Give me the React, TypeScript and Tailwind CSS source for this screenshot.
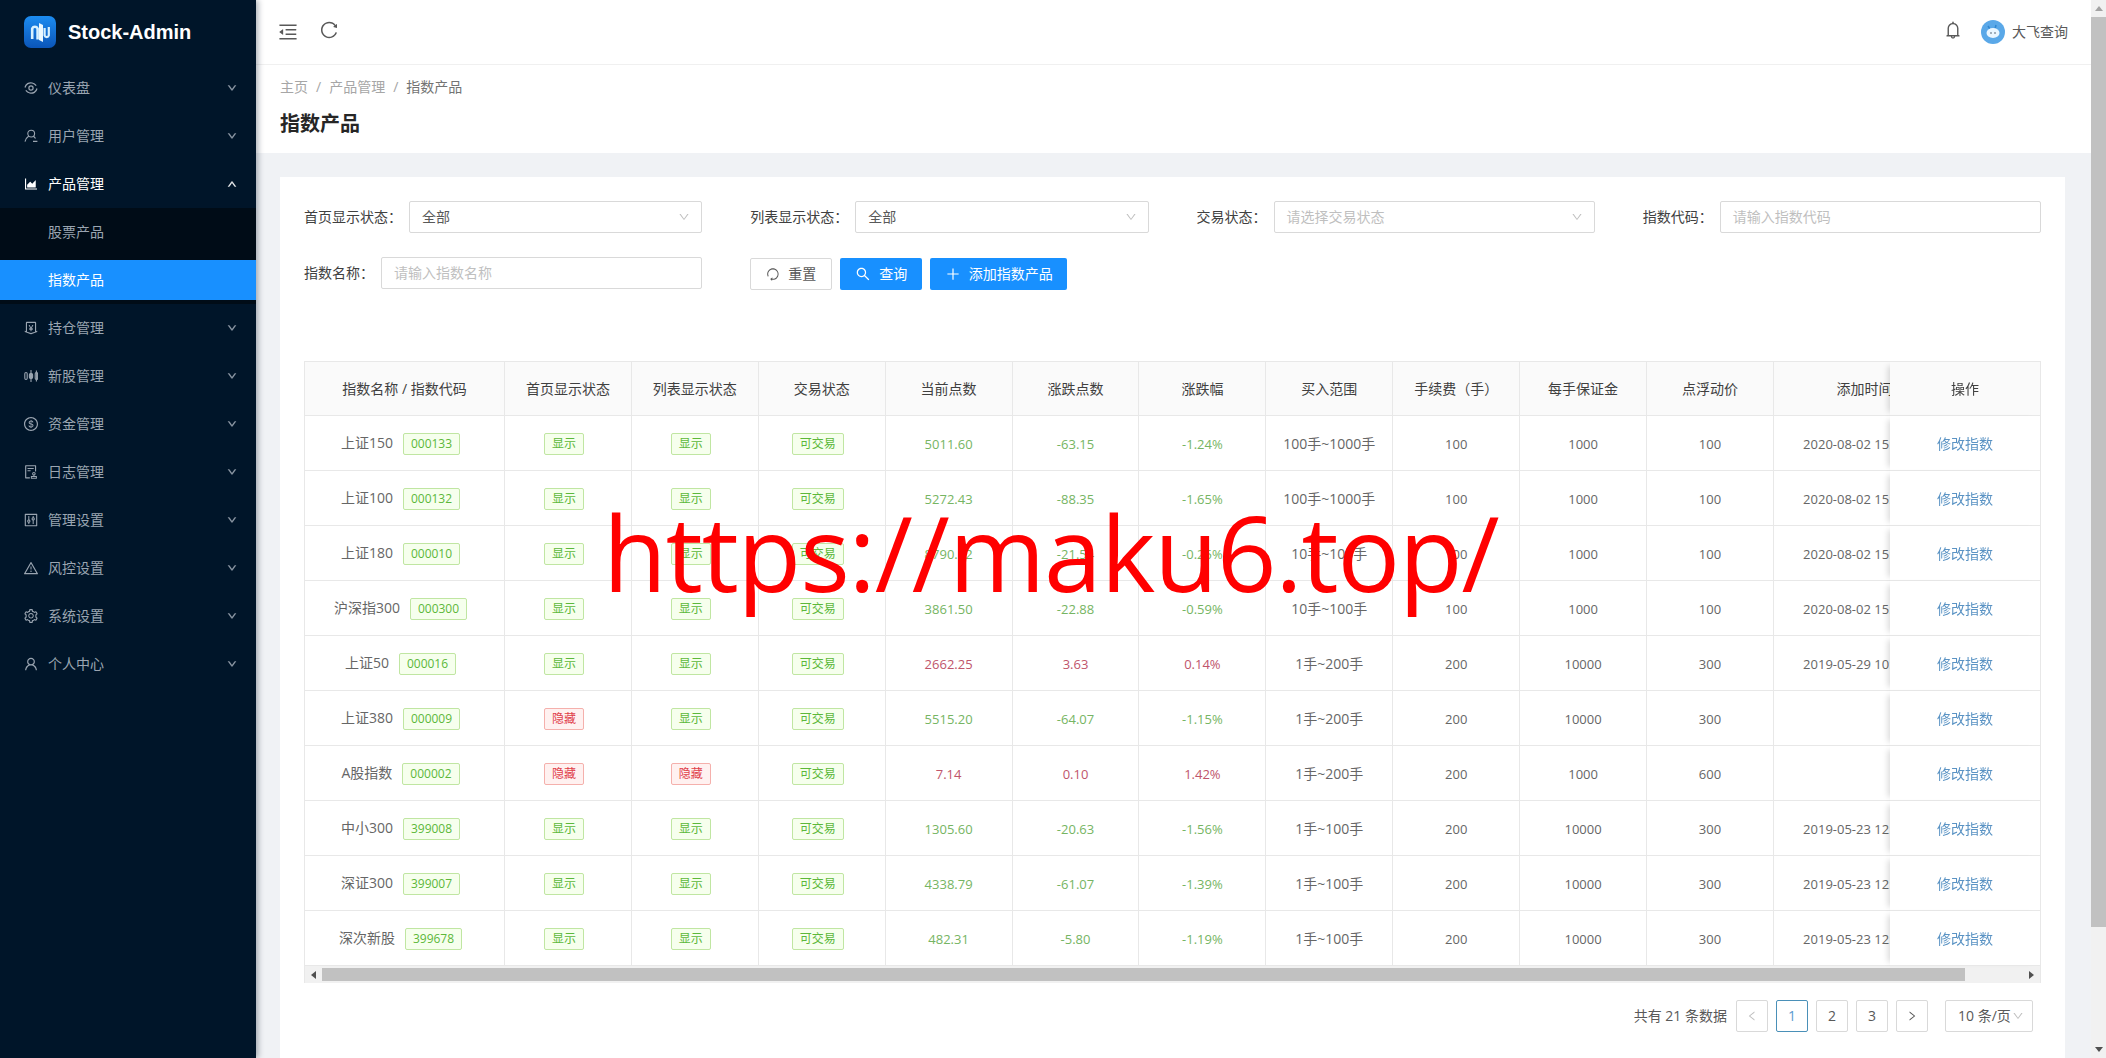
import React from 'react';
import {
  AiOutlineAreaChart,
  AiOutlineAudit,
  AiOutlineBell,
  AiOutlineControl,
  AiOutlineDollar,
  AiOutlineDown,
  AiOutlineLeft,
  AiOutlineMenuFold,
  AiOutlineMoneyCollect,
  AiOutlinePlus,
  AiOutlineReload,
  AiOutlineRight,
  AiOutlineSearch,
  AiOutlineSetting,
  AiOutlineUp,
  AiOutlineUser,
  AiOutlineWarning,
} from 'react-icons/ai';

const GREEN = 'text-[#76b563]';
const RED = 'text-[#c0556b]';

type Row = {
  name: string;
  code: string;
  home: boolean;
  list: boolean;
  price: string;
  diff: string;
  pct: string;
  range: string;
  fee: string;
  margin: string;
  point: string;
  time: string;
};

const rows: Row[] = [
  { name: '上证150', code: '000133', home: true, list: true, price: '5011.60', diff: '-63.15', pct: '-1.24%', range: '100手~1000手', fee: '100', margin: '1000', point: '100', time: '2020-08-02 15:10:41' },
  { name: '上证100', code: '000132', home: true, list: true, price: '5272.43', diff: '-88.35', pct: '-1.65%', range: '100手~1000手', fee: '100', margin: '1000', point: '100', time: '2020-08-02 15:10:22' },
  { name: '上证180', code: '000010', home: true, list: true, price: '8790.22', diff: '-21.54', pct: '-0.25%', range: '10手~100手', fee: '100', margin: '1000', point: '100', time: '2020-08-02 15:09:58' },
  { name: '沪深指300', code: '000300', home: true, list: true, price: '3861.50', diff: '-22.88', pct: '-0.59%', range: '10手~100手', fee: '100', margin: '1000', point: '100', time: '2020-08-02 15:09:31' },
  { name: '上证50', code: '000016', home: true, list: true, price: '2662.25', diff: '3.63', pct: '0.14%', range: '1手~200手', fee: '200', margin: '10000', point: '300', time: '2019-05-29 10:21:05' },
  { name: '上证380', code: '000009', home: false, list: true, price: '5515.20', diff: '-64.07', pct: '-1.15%', range: '1手~200手', fee: '200', margin: '10000', point: '300', time: '' },
  { name: 'A股指数', code: '000002', home: false, list: false, price: '7.14', diff: '0.10', pct: '1.42%', range: '1手~200手', fee: '200', margin: '1000', point: '600', time: '' },
  { name: '中小300', code: '399008', home: true, list: true, price: '1305.60', diff: '-20.63', pct: '-1.56%', range: '1手~100手', fee: '200', margin: '10000', point: '300', time: '2019-05-23 12:40:16' },
  { name: '深证300', code: '399007', home: true, list: true, price: '4338.79', diff: '-61.07', pct: '-1.39%', range: '1手~100手', fee: '200', margin: '10000', point: '300', time: '2019-05-23 12:38:47' },
  { name: '深次新股', code: '399678', home: true, list: true, price: '482.31', diff: '-5.80', pct: '-1.19%', range: '1手~100手', fee: '200', margin: '10000', point: '300', time: '2019-05-23 12:36:02' },
];

const headers = ['指数名称 / 指数代码', '首页显示状态', '列表显示状态', '交易状态', '当前点数', '涨跌点数', '涨跌幅', '买入范围', '手续费（手）', '每手保证金', '点浮动价', '添加时间'];

const DashIcon = () => (
  <svg viewBox="0 0 14 14" className="w-[14px] h-[14px]" fill="none" stroke="currentColor" strokeWidth="1.2">
    <circle cx="7" cy="7" r="2.1" />
    <path d="M1 6.5C1.8 3 5 1.2 8.2 2c1.6.4 3 1.3 4 2.6M13 7.5c-.8 3.5-4 5.3-7.2 4.5-1.6-.4-3-1.3-4-2.6" />
  </svg>
);

const UserLineIcon = () => (
  <svg viewBox="0 0 14 14" className="w-[14px] h-[14px]" fill="none" stroke="currentColor" strokeWidth="1.1">
    <circle cx="7.2" cy="4.6" r="3.4" />
    <path d="M4.8 7C3 8.2 1.6 10 1 12.6M9.4 7.2c.9.6 1.6 1.4 2.1 2.3M9 12.4h4.4" />
  </svg>
);

const CandleIcon = () => (
  <svg viewBox="0 0 14 14" className="w-[14px] h-[14px]" fill="none" stroke="currentColor" strokeWidth="1.1">
    <rect x="0.8" y="3.5" width="2.4" height="7" rx="1.2" />
    <path d="M7 1v12M12.4 1.5v11" />
    <rect x="5.4" y="4.5" width="3.2" height="5" rx="1.2" fill="currentColor" />
    <rect x="11.2" y="3.5" width="2.4" height="7" rx="1.2" />
  </svg>
);

const LogoIcon = () => (
  <svg viewBox="0 0 32 32" className="w-8 h-8 shrink-0">
    <defs>
      <linearGradient id="logoBg" x1="0" y1="0" x2="0" y2="1">
        <stop offset="0" stopColor="#1c8cf0" />
        <stop offset="1" stopColor="#0b55b8" />
      </linearGradient>
    </defs>
    <rect width="32" height="32" rx="7" fill="url(#logoBg)" />
    <path d="M8.2 23V12.5a3 3 0 0 1 5.4 0V23.5" fill="none" stroke="#d8f1ff" strokeWidth="2.6" />
    <path d="M15 7l4 2v17l-4-2z" fill="#eaf8ff" />
    <path d="M20.6 12v7.5a2.2 2.2 0 0 0 4.2 0V11" fill="none" stroke="#d8f1ff" strokeWidth="2.2" />
  </svg>
);

const menus: { label: string; icon: React.ReactNode; open?: boolean }[] = [
  { label: '仪表盘', icon: <DashIcon /> },
  { label: '用户管理', icon: <UserLineIcon /> },
  { label: '产品管理', icon: <AiOutlineAreaChart size={16} className="-ml-px" />, open: true },
  { label: '持仓管理', icon: <AiOutlineMoneyCollect size={16} className="-ml-px" /> },
  { label: '新股管理', icon: <CandleIcon /> },
  { label: '资金管理', icon: <AiOutlineDollar size={16} className="-ml-px" /> },
  { label: '日志管理', icon: <AiOutlineAudit size={16} className="-ml-px" /> },
  { label: '管理设置', icon: <AiOutlineControl size={16} className="-ml-px" /> },
  { label: '风控设置', icon: <AiOutlineWarning size={16} className="-ml-px" /> },
  { label: '系统设置', icon: <AiOutlineSetting size={16} className="-ml-px" /> },
  { label: '个人中心', icon: <AiOutlineUser size={16} className="-ml-px" /> },
];

const Sidebar = () => (
  <aside className="w-64 shrink-0 h-full bg-[#001529] text-[#9aa5b1] text-sm shadow-[2px_0_6px_rgba(0,21,41,0.35)] z-10">
    <div className="h-16 flex items-center pl-6 gap-3">
      <LogoIcon />
      <span className="text-white text-xl font-bold font-['Liberation_Sans',sans-serif]">Stock-Admin</span>
    </div>
    {menus.map((m) => (
      <div key={m.label}>
        <div className={`h-12 flex items-center pl-6 pr-[19px] ${m.open ? 'text-white' : ''}`}>
          <span className="w-6 shrink-0 flex items-center">{m.icon}</span>
          <span className="flex-1">{m.label}</span>
          {m.open ? <AiOutlineUp size={10} className="stroke-[60]" /> : <AiOutlineDown size={10} className="stroke-[60]" />}
        </div>
        {m.open && (
          <div className="bg-[#000c17] pt-1 h-24">
            <div className="h-10 flex items-center pl-12">股票产品</div>
            <div className="h-10 mt-2 flex items-center pl-12 bg-[#1890ff] text-white">指数产品</div>
          </div>
        )}
      </div>
    ))}
  </aside>
);

const Tag = ({ ok, children }: { ok: boolean; children: React.ReactNode }) => (
  <span
    className={`inline-block h-[22px] leading-[20px] px-[7px] mr-2 text-xs rounded-[2px] border ${
      ok ? 'bg-[#f6ffed] border-[#c0e6a2] text-[#5cb83a]' : 'bg-[#fff1f0] border-[#f5b0ac] text-[#e0404a]'
    }`}
  >
    {children}
  </span>
);

const Label = ({ children }: { children: React.ReactNode }) => (
  <span className="shrink-0 text-[#404040] mr-[7px]">{children}：</span>
);

const SelectBox = ({ text, placeholder }: { text: string; placeholder?: boolean }) => (
  <div className="flex-1 h-8 border border-[#d9d9d9] rounded-[2px] flex items-center justify-between pl-3 pr-[11px] bg-white">
    <span className={placeholder ? 'text-[#bfbfbf]' : 'text-[#595959]'}>{text}</span>
    <AiOutlineDown size={12} className="text-[#bfbfbf]" />
  </div>
);

const InputBox = ({ placeholder }: { placeholder: string }) => (
  <div className="flex-1 h-8 border border-[#d9d9d9] rounded-[2px] flex items-center pl-3 text-[#bfbfbf] bg-white">{placeholder}</div>
);

const Filters = () => (
  <div className="grid grid-cols-4 gap-x-12 gap-y-6">
    <div className="flex items-center">
      <Label>首页显示状态</Label>
      <SelectBox text="全部" />
    </div>
    <div className="flex items-center">
      <Label>列表显示状态</Label>
      <SelectBox text="全部" />
    </div>
    <div className="flex items-center">
      <Label>交易状态</Label>
      <SelectBox text="请选择交易状态" placeholder />
    </div>
    <div className="flex items-center">
      <Label>指数代码</Label>
      <InputBox placeholder="请输入指数代码" />
    </div>
    <div className="flex items-center">
      <Label>指数名称</Label>
      <InputBox placeholder="请输入指数名称" />
    </div>
    <div className="flex items-center gap-2 col-span-3 translate-y-px">
      <button className="h-8 w-[82px] border border-[#d9d9d9] rounded-[2px] text-[#595959] flex items-center justify-center gap-2 bg-white">
        <AiOutlineReload size={14} className="rotate-[135deg]" />
        重置
      </button>
      <button className="h-8 w-[82px] rounded-[2px] bg-[#1890ff] text-white flex items-center justify-center gap-2">
        <AiOutlineSearch size={16} />
        查询
      </button>
      <button className="h-8 w-[137px] rounded-[2px] bg-[#1890ff] text-white flex items-center justify-center gap-2">
        <AiOutlinePlus size={16} />
        添加指数产品
      </button>
    </div>
  </div>
);

const cell = 'border-b border-r border-[#e8e8e8] text-center';

const IndexTable = () => (
  <div className="mt-[72px] border-t border-l border-r border-[#e8e8e8] overflow-hidden">
    <table className="table-fixed border-separate border-spacing-0 w-[1801px] text-[#666666]">
      <colgroup>
        <col className="w-[200px]" />
        {[0, 1, 2, 3, 4, 5, 6, 7, 8, 9].map((i) => (
          <col key={i} className="w-[126.9px]" />
        ))}
        <col className="w-[182px]" />
        <col className="w-[150px]" />
      </colgroup>
      <thead>
        <tr className="h-[54px]">
          {headers.map((h) => (
            <th key={h} className={`${cell} bg-[#fafafa] font-normal text-[#404040]`}>
              {h}
            </th>
          ))}
          <th className="border-b border-[#e8e8e8] text-center bg-[#fafafa] font-normal text-[#404040] sticky right-0 shadow-[-6px_0_6px_-4px_rgba(0,0,0,0.15)]">操作</th>
        </tr>
      </thead>
      <tbody>
        {rows.map((r) => {
          const up = !r.diff.startsWith('-');
          const color = up ? RED : GREEN;
          return (
            <tr key={r.code} className="h-[55px] [&>td]:pt-0.5">
              <td className={cell}>
                {r.name}
                <span className="inline-block w-[10px]" />
                <Tag ok>{r.code}</Tag>
              </td>
              <td className={cell}>
                <Tag ok={r.home}>{r.home ? '显示' : '隐藏'}</Tag>
              </td>
              <td className={cell}>
                <Tag ok={r.list}>{r.list ? '显示' : '隐藏'}</Tag>
              </td>
              <td className={cell}>
                <Tag ok>可交易</Tag>
              </td>
              <td className={`${cell} ${color} text-[13px]`}>{r.price}</td>
              <td className={`${cell} ${color} text-[13px]`}>{r.diff}</td>
              <td className={`${cell} ${color} text-[13px]`}>{r.pct}</td>
              <td className={cell}>{r.range}</td>
              <td className={`${cell} text-[13px]`}>{r.fee}</td>
              <td className={`${cell} text-[13px]`}>{r.margin}</td>
              <td className={`${cell} text-[13px]`}>{r.point}</td>
              <td className={`${cell} text-[13px] whitespace-nowrap`}>{r.time}</td>
              <td className="border-b border-[#e8e8e8] text-center bg-white text-[#5a93c4] sticky right-0 shadow-[-6px_0_6px_-4px_rgba(0,0,0,0.15)]">修改指数</td>
            </tr>
          );
        })}
      </tbody>
    </table>
    <div className="h-[17px] bg-[#f1f1f1] flex items-center">
      <span className="w-[17px] flex justify-center">
        <span className="border-y-[4px] border-y-transparent border-r-[5px] border-r-[#505050]" />
      </span>
      <div className="w-[1643px] h-[13px] bg-[#c1c1c1]" />
      <span className="flex-1 flex justify-end pr-[6px]">
        <span className="border-y-[4px] border-y-transparent border-l-[5px] border-l-[#505050]" />
      </span>
    </div>
  </div>
);

const PageBtn = ({ children, active }: { children: React.ReactNode; active?: boolean }) => (
  <div className={`w-8 h-8 rounded-[2px] border flex items-center justify-center ${active ? 'border-[#4a90b8] text-[#5a9bd0]' : 'border-[#d9d9d9] text-[#595959]'}`}>
    {children}
  </div>
);

const Pagination = () => (
  <div className="mt-[17px] flex items-center justify-end gap-2 pr-2 text-[#595959]">
    <span className="mr-[1px]">共有 21 条数据</span>
    <PageBtn>
      <AiOutlineLeft size={12} className="text-[#bfbfbf]" />
    </PageBtn>
    <PageBtn active>1</PageBtn>
    <PageBtn>2</PageBtn>
    <PageBtn>3</PageBtn>
    <PageBtn>
      <AiOutlineRight size={12} />
    </PageBtn>
    <div className="ml-[9px] w-[88px] h-8 rounded-[2px] border border-[#d9d9d9] flex items-center pl-3 pr-2 justify-between">
      <span className="whitespace-nowrap">10 条/页</span>
      <AiOutlineDown size={12} className="text-[#bfbfbf] shrink-0" />
    </div>
  </div>
);

const Avatar = () => (
  <svg viewBox="0 0 24 24" className="w-6 h-6">
    <circle cx="12" cy="12" r="12" fill="#5aa8e8" />
    <path d="M7 6l2 3M15 5l-1 4" stroke="#2f86d0" strokeWidth="1.5" />
    <ellipse cx="12" cy="13" rx="6.5" ry="5" fill="#eaf6ff" />
    <circle cx="10" cy="13" r=".8" fill="#456" />
    <circle cx="14" cy="13" r=".8" fill="#456" />
  </svg>
);

const Topbar = () => (
  <header className="h-[65px] shrink-0 bg-white border-b border-[#f0f0f0] flex items-center pl-[21px] pr-[23px] text-[#595959]">
    <AiOutlineMenuFold size={22} />
    <AiOutlineReload size={20} className="ml-5 -mt-1" />
    <AiOutlineBell size={20} className="ml-auto -mt-1" />
    <span className="ml-[18px] mr-[7px]">
      <Avatar />
    </span>
    <span>大飞查询</span>
  </header>
);

export default function App() {
  return (
    <div className="h-[1058px] w-[2106px] overflow-hidden flex text-sm font-['Open_Sans','Noto_Sans_CJK_SC',sans-serif] relative">
      <Sidebar />
      <main className="flex-1 min-w-0 flex flex-col bg-[#f0f2f5]">
        <Topbar />
        <div className="h-[88px] shrink-0 bg-white px-6 pt-3">
          <div className="text-[#a6a6a6] h-5 flex items-center">
            主页<span className="mx-2">/</span>产品管理<span className="mx-2">/</span>
            <span className="text-[#737373]">指数产品</span>
          </div>
          <h1 className="mt-[13px] text-xl font-semibold text-[#262626] leading-7">指数产品</h1>
        </div>
        <div className="flex-1 pt-6 pl-6 pr-[26px]">
          <section className="bg-white p-6 h-[900px]">
            <Filters />
            <IndexTable />
            <Pagination />
          </section>
        </div>
      </main>
      <div className="w-[15px] shrink-0 h-full bg-[#f1f1f1] flex flex-col items-center">
        <span className="mt-[6px] border-x-[4px] border-x-transparent border-b-[5px] border-b-[#a3a3a3]" />
        <div className="mt-[6px] w-full h-[910px] bg-[#c1c1c1]" />
        <span className="mt-auto mb-[6px] border-x-[4px] border-x-transparent border-t-[5px] border-t-[#505050]" />
      </div>
      {/* watermark over the page */}
      <div className="absolute left-[603px] top-[483px] text-[104px] tracking-[-1.1px] leading-[137px] text-[#ff0000] whitespace-nowrap font-['Open_Sans',sans-serif]">
        https://maku6.top/
      </div>
    </div>
  );
}
